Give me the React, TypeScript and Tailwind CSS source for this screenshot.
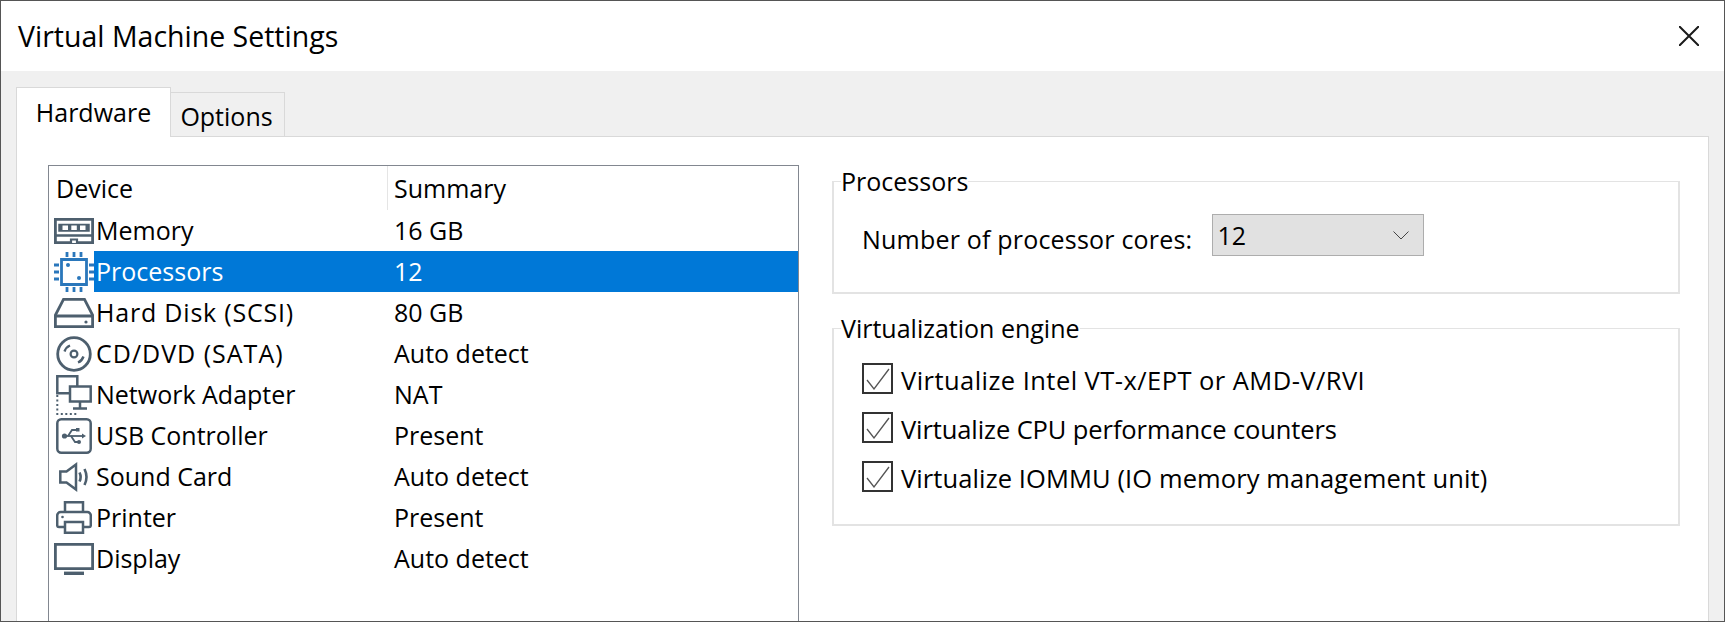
import React from "react";

const font = "font-['Open_Sans','Noto_Sans',sans-serif]";
const slate = "#4d5f6e";

function MemoryIcon() {
  return (
    <svg width="40" height="26" viewBox="0 0 40 26" fill="none" stroke={slate} strokeWidth="2.800">
      <path d="M1.400 1.400h37.200v23.200h-37.200z" />
      <path d="M1 17.500h38" strokeWidth="2.400" />
      <path d="M5 6.500h30v6.500h-30z" fill={slate} strokeWidth="1.500" />
      <path d="M8.500 7.500h5.500v4.500h-5.500zM17.300 7.500h5.500v4.500h-5.500zM26 7.500h5.500v4.500h-5.500z" fill="#fff" stroke="none" />
      <path d="M17 25v-3.500h6v3.500" strokeWidth="2.200" fill="#fff" />
    </svg>
  );
}

function CpuIcon() {
  return (
    <svg width="40" height="40" viewBox="0 0 40 40" fill="none" stroke="#2a77bb" strokeWidth="2.800">
      <path d="M7.500 7.500h25v25h-25z" />
      <circle cx="14" cy="13" r="2" fill="#2a77bb" stroke="none" />
      <circle cx="25" cy="26" r="2" fill="#2a77bb" stroke="none" />
      <path d="M13 0v5M20 0v5M27 0v5M13 35v5M20 35v5M27 35v5M0 13h5M0 20h5M0 27h5M35 13h5M35 20h5M35 27h5" />
    </svg>
  );
}

function DiskIcon() {
  return (
    <svg width="40" height="30" viewBox="0 0 40 30" fill="none" stroke={slate} strokeWidth="2.800">
      <path d="M9.500 1.400h21l8.100 15.600v11.600h-37.200v-11.600z" />
      <path d="M1 18h38" />
      <circle cx="32" cy="24" r="1.600" fill={slate} stroke="none" />
    </svg>
  );
}

function CdIcon() {
  return (
    <svg width="36" height="36" viewBox="0 0 36 36" fill="none" stroke={slate} strokeWidth="2.800">
      <circle cx="18" cy="18" r="16.300" />
      <circle cx="18" cy="18" r="3.400" strokeWidth="2.200" />
      <path d="M8.500 15.500c1-2.800 3-5 5.500-6M27.500 20.500c-1 2.800-3 5-5.500 6" strokeWidth="2.400" />
    </svg>
  );
}

function NetworkIcon() {
  return (
    <svg width="36" height="40" viewBox="0 0 36 40" fill="none" stroke={slate} strokeWidth="2.500">
      <path d="M1.300 1.300h20v17h-20z" />
      <path d="M14 11.500h20.700v15h-20.700z" fill="#fff" />
      <path d="M24 27v6M17 33.500h14" />
      <path d="M1.300 20v19h20" strokeDasharray="2 2.500" strokeWidth="2" />
    </svg>
  );
}

function UsbIcon() {
  return (
    <svg width="36" height="36" viewBox="0 0 36 36" fill="none" stroke={slate} strokeWidth="2.500">
      <rect x="1.300" y="1.300" width="33.400" height="33.400" rx="4" />
      <path d="M8 18h19" strokeWidth="1.800" />
      <circle cx="8.500" cy="18" r="2.600" fill={slate} stroke="none" />
      <path d="M30 18l-4-2.500v5z" fill={slate} stroke="none" />
      <path d="M12 18l4-6h4M15 18l4 6h3" strokeWidth="1.800" />
      <path d="M20 10h3.500v3.500h-3.500z" fill={slate} stroke="none" />
      <circle cx="23" cy="24" r="2" fill={slate} stroke="none" />
    </svg>
  );
}

function SoundIcon() {
  return (
    <svg width="30" height="30" viewBox="0 0 30 30" fill="none" stroke={slate} strokeWidth="2.500">
      <path d="M1.300 9.500h6.200l9.500-7v25l-9.500-7h-6.200z" />
      <path d="M20.500 10.500c1.500 3 1.500 6 0 9" strokeWidth="2.600" />
      <path d="M25.500 7c2.500 5 2.500 11 0 16" strokeWidth="2.600" />
    </svg>
  );
}

function PrinterIcon() {
  return (
    <svg width="36" height="33" viewBox="0 0 36 33" fill="none" stroke={slate} strokeWidth="2.500">
      <path d="M9 11v-9.700h18v9.700" />
      <path d="M8 26h-5a1.800 1.800 0 0 1-1.800-1.800v-9.700a3.500 3.500 0 0 1 3.500-3.500h26.600a3.500 3.500 0 0 1 3.500 3.500v9.700a1.800 1.800 0 0 1-1.800 1.800h-5" />
      <path d="M9 21h18v10.700h-18z" />
      <circle cx="6.500" cy="16" r="1.300" fill={slate} stroke="none" />
    </svg>
  );
}

function DisplayIcon() {
  return (
    <svg width="40" height="32" viewBox="0 0 40 32" fill="none" stroke={slate}>
      <path d="M1.400 1.400h37.200v24.200h-37.200z" strokeWidth="2.800" />
      <path d="M10 30.300h20" strokeWidth="3.400" />
    </svg>
  );
}

const rows = [
  { name: "Memory", summary: "16 GB", icon: <MemoryIcon /> },
  { name: "Processors", summary: "12", icon: <CpuIcon />, selected: true },
  { name: "Hard Disk (SCSI)", summary: "80 GB", icon: <DiskIcon />, track: "tracking-[0.8px]" },
  { name: "CD/DVD (SATA)", summary: "Auto detect", icon: <CdIcon />, track: "tracking-[1px]" },
  { name: "Network Adapter", summary: "NAT", icon: <NetworkIcon /> },
  { name: "USB Controller", summary: "Present", icon: <UsbIcon /> },
  { name: "Sound Card", summary: "Auto detect", icon: <SoundIcon /> },
  { name: "Printer", summary: "Present", icon: <PrinterIcon /> },
  { name: "Display", summary: "Auto detect", icon: <DisplayIcon /> },
];

const checks = [
  { label: "Virtualize Intel VT-x/EPT or AMD-V/RVI", track: "tracking-[0.45px]" },
  { label: "Virtualize CPU performance counters", track: "tracking-[-0.1px]" },
  { label: "Virtualize IOMMU (IO memory management unit)", track: "tracking-[0.1px]" },
];

export default function App() {
  return (
    <div className={`${font} w-[1725px] h-[622px] overflow-hidden flex flex-col bg-[#f0f0f0] border border-[#555555] text-[25px] leading-[34px] text-black`}>
      {/* Title bar */}
      <div className="h-[70px] shrink-0 bg-white flex items-center justify-between pl-[17px] pr-[25px]">
        <span className="text-[28.500px]">Virtual Machine Settings</span>
        <svg width="20" height="20" viewBox="0 0 20 20" stroke="#1a1a1a" strokeWidth="2">
          <path d="M0 0l20 20M20 0l-20 20" />
        </svg>
      </div>

      {/* Tabs */}
      <div className="pl-[15px] pt-4 flex items-end">
        <div className="w-[155px] h-[50px] bg-white border border-b-0 border-[#d9d9d9] flex items-center justify-center -mb-px relative z-10 pb-[2px]">
          Hardware
        </div>
        <div className="w-[114px] h-[44px] bg-[#f0f0f0] border border-l-0 border-b-0 border-[#d9d9d9] flex items-center justify-center pt-[2px] pr-[2px]">
          Options
        </div>
      </div>

      {/* Tab panel */}
      <div className="flex-1 ml-[15px] mr-[15px] bg-white border border-b-0 border-[#d9d9d9] flex pl-[31px] pt-7 min-h-0">
        {/* Device list */}
        <div className="w-[751px] shrink-0 border border-b-0 border-[#828790] bg-white flex flex-col">
          <div className="h-[44px] shrink-0 flex items-center">
            <div className="w-[339px] h-full flex items-center pl-[7px] border-r border-[#e5e5e5]">Device</div>
            <div className="pl-[6px]">Summary</div>
          </div>
          {rows.map((r) => (
            <div key={r.name} className="h-[41px] shrink-0 flex items-center">
              <div className="w-[45px] shrink-0 pl-[5px] flex items-center justify-center">{r.icon}</div>
              <div className={`flex-1 h-full flex items-center pb-px ${r.selected ? "bg-[#0078d7] text-white" : ""}`}>
                <span className={`w-[300px] pl-[2px] ${r.track ?? ""}`}>{r.name}</span>
                <span>{r.summary}</span>
              </div>
            </div>
          ))}
        </div>

        {/* Right side */}
        <div className="w-[848px] ml-[33px] flex flex-col gap-[17px]">
          <fieldset className="h-[130px] border-2 border-[#e3e3e3] border-t-[1.500px] pl-7 -mt-px">
            <legend className="-ml-[21px]">Processors</legend>
            <div className="flex items-start gap-5 mt-4">
              <span className="mt-2 tracking-[0.2px]">Number of processor cores:</span>
              <div className="w-[212px] h-[42px] bg-[#e1e1e1] border border-[#adadad] flex items-center justify-between pl-[4px] pr-[14px]">
                <span>12</span>
                <svg width="16" height="9" viewBox="0 0 16 9" fill="none" stroke="#444" strokeWidth="1">
                  <path d="M0.500 0.500l7.500 7.500 7.500-7.500" />
                </svg>
              </div>
            </div>
          </fieldset>

          <fieldset className="h-[215px] border-2 border-[#e3e3e3] border-t-[1.500px] pl-7">
            <legend className="-ml-[21px]">Virtualization engine</legend>
            <div className="flex flex-col gap-[18px] mt-[18px]">
              {checks.map((c) => (
                <div key={c.label} className="h-[31px] flex items-center gap-2">
                  <div className="w-[31px] h-[31px] shrink-0 border-2 border-[#333333] flex items-center justify-center bg-white">
                    <svg width="24" height="22" viewBox="0 0 24 22" fill="none" stroke="#555" strokeWidth="1.300">
                      <path d="M1 12l7 9 15-20" />
                    </svg>
                  </div>
                  <span className={`text-[25.500px] mt-[2px] whitespace-nowrap ${c.track}`}>{c.label}</span>
                </div>
              ))}
            </div>
          </fieldset>
        </div>
      </div>
    </div>
  );
}
